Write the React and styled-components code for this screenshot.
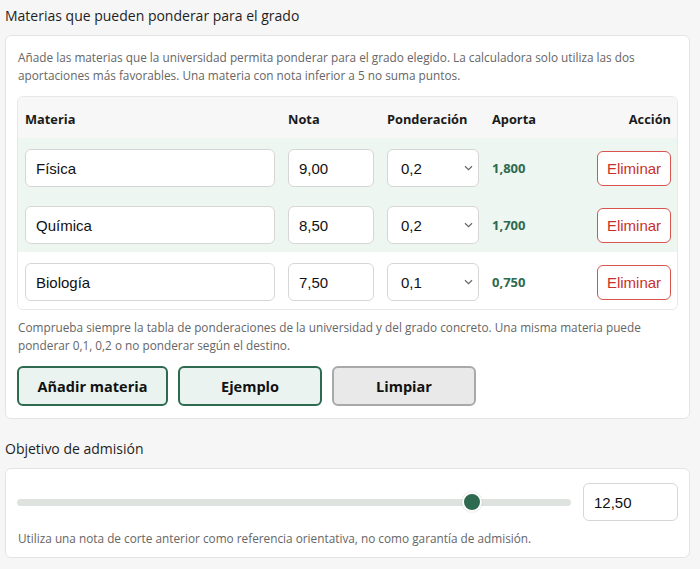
import React from "react";
import styled, { createGlobalStyle } from "styled-components";

const Global = createGlobalStyle`
  html, body { margin: 0; padding: 0; background: #f6f6f6; }
  body { font-family: "Open Sans", "Noto Sans", sans-serif; color: #222; }
  * { box-sizing: border-box; }
`;

const Page = styled.div`
  padding: 5px 10px 12px 5px;
`;

const SectionTitle = styled.h2`
  margin: ${(p) => (p.$first ? "0" : "19px")} 0 8px 0;
  font-size: 14px;
  line-height: 22px;
  font-weight: 400;
  color: #1e1e1e;
`;

const Card = styled.section`
  background: #fff;
  border: 1px solid #e4e4e4;
  border-radius: 6px;
  padding: ${(p) => p.$pad || "12px 11px 12px 11px"};
`;

const Note = styled.p`
  margin: 0;
  padding-left: 1px;
  font-size: 11.8px;
  line-height: 18px;
  color: #666;
`;

const TableBox = styled.div`
  margin: 12px 0 8px;
  border: 1px solid #e8e8e8;
  border-radius: 6px;
  overflow: hidden;
`;

const Row = styled.div`
  display: grid;
  grid-template-columns: 250px 86px 92px 1fr 74px;
  column-gap: 13px;
  align-items: center;
  padding: ${(p) => (p.$head ? "0 6px 0 7px" : "3px 6px 0 7px")};
  height: ${(p) => (p.$head ? "41px" : "57px")};
  background: ${(p) => (p.$head ? "#f6f7f6" : p.$hl ? "#eef6f1" : "#fff")};
`;

const HeadCell = styled.div`
  font-family: "Open Sans", sans-serif;
  font-weight: 700;
  font-size: 12.8px;
  color: #1a1a1a;
  padding-top: 2px;
  text-align: ${(p) => (p.$right ? "right" : "left")};
`;

const Field = styled.input`
  width: 100%;
  height: 38px;
  border: 1px solid #d6d6d6;
  border-radius: 6px;
  background: #fff;
  padding: 0 10px;
  font-family: "Liberation Sans", Arial, sans-serif;
  font-size: 15px;
  color: #111;
  outline: none;
`;

const SelectWrap = styled.div`
  position: relative;
  height: 38px;
`;

const Select = styled.select`
  appearance: none;
  -webkit-appearance: none;
  width: 100%;
  height: 38px;
  border: 1px solid #d6d6d6;
  border-radius: 6px;
  background: #fff;
  padding: 0 13px;
  font-family: "Liberation Sans", Arial, sans-serif;
  font-size: 15px;
  color: #111;
  outline: none;
`;

const Chevron = styled.svg`
  position: absolute;
  right: 6px;
  top: 16px;
  width: 9px;
  height: 6px;
  pointer-events: none;
`;

const Contrib = styled.div`
  font-family: "Open Sans", sans-serif;
  font-weight: 700;
  font-size: 13px;
  color: #2d6a4f;
`;

const DangerButton = styled.button`
  height: 35px;
  width: 74px;
  border: 1px solid #d9534f;
  border-radius: 6px;
  background: #fff;
  color: #c9302c;
  font-family: "Liberation Sans", Arial, sans-serif;
  font-size: 15px;
  padding: 0;
  cursor: pointer;
`;

const Actions = styled.div`
  display: flex;
  gap: 10px;
  margin-top: 12px;
`;

const ActionButton = styled.button`
  height: 40px;
  min-width: ${(p) => p.$min || 144}px;
  padding: 0 16px;
  border: 2px solid ${(p) => (p.$muted ? "#a9a9a9" : "#2d6a4f")};
  border-radius: 6px;
  background: ${(p) => (p.$muted ? "#e9e9e9" : "#eaf3ef")};
  color: #111;
  font-family: "Open Sans", sans-serif;
  font-weight: 700;
  font-size: 14.5px;
  cursor: pointer;
`;

const SliderRow = styled.div`
  display: flex;
  align-items: center;
  gap: 12px;
  margin-bottom: 8px;
`;

const Range = styled.input`
  -webkit-appearance: none;
  appearance: none;
  flex: 1;
  height: 20px;
  margin: 0;
  background: transparent;
  &::-webkit-slider-runnable-track {
    height: 7px;
    border-radius: 4px;
    background: #dee3e0;
  }
  &::-webkit-slider-thumb {
    -webkit-appearance: none;
    width: 20px;
    height: 20px;
    margin-top: -6.5px;
    border-radius: 50%;
    background: #2d6a4f;
    border: 2px solid #fff;
    box-shadow: 0 0 2px rgba(0,0,0,0.2);
  }
`;

const TargetField = styled(Field)`
  width: 95px;
  flex: none;
`;

const rows = [
  { name: "Física", nota: "9,00", pond: "0,2", aporta: "1,800", hl: true },
  { name: "Química", nota: "8,50", pond: "0,2", aporta: "1,700", hl: true },
  { name: "Biología", nota: "7,50", pond: "0,1", aporta: "0,750", hl: false },
];

export default function App() {
  return (
    <>
      <Global />
      <Page>
        <SectionTitle $first>Materias que pueden ponderar para el grado</SectionTitle>
        <Card>
          <Note>
            Añade las materias que la universidad permita ponderar para el grado elegido. La calculadora solo utiliza las dos
            aportaciones más favorables. Una materia con nota inferior a 5 no suma puntos.
          </Note>
          <TableBox>
            <Row $head>
              <HeadCell>Materia</HeadCell>
              <HeadCell>Nota</HeadCell>
              <HeadCell>Ponderación</HeadCell>
              <HeadCell>Aporta</HeadCell>
              <HeadCell $right>Acción</HeadCell>
            </Row>
            {rows.map((r) => (
              <Row key={r.name} $hl={r.hl}>
                <Field defaultValue={r.name} />
                <Field defaultValue={r.nota} />
                <SelectWrap>
                  <Select defaultValue={r.pond}>
                    <option>0,1</option>
                    <option>0,2</option>
                    <option>0</option>
                  </Select>
                  <Chevron viewBox="0 0 9 6">
                    <path d="M1 1.2 L4.5 4.6 L8 1.2" fill="none" stroke="#666" strokeWidth="1.2" />
                  </Chevron>
                </SelectWrap>
                <Contrib>{r.aporta}</Contrib>
                <DangerButton>Eliminar</DangerButton>
              </Row>
            ))}
          </TableBox>
          <Note>
            Comprueba siempre la tabla de ponderaciones de la universidad y del grado concreto. Una misma materia puede
            ponderar 0,1, 0,2 o no ponderar según el destino.
          </Note>
          <Actions>
            <ActionButton $min={151}>Añadir materia</ActionButton>
            <ActionButton>Ejemplo</ActionButton>
            <ActionButton $muted>Limpiar</ActionButton>
          </Actions>
        </Card>
        <SectionTitle>Objetivo de admisión</SectionTitle>
        <Card $pad="14px 11px 10px 11px">
          <SliderRow>
            <Range type="range" min="5" max="14" step="0.01" defaultValue="12.5" />
            <TargetField defaultValue="12,50" />
          </SliderRow>
          <Note>Utiliza una nota de corte anterior como referencia orientativa, no como garantía de admisión.</Note>
        </Card>
      </Page>
    </>
  );
}
